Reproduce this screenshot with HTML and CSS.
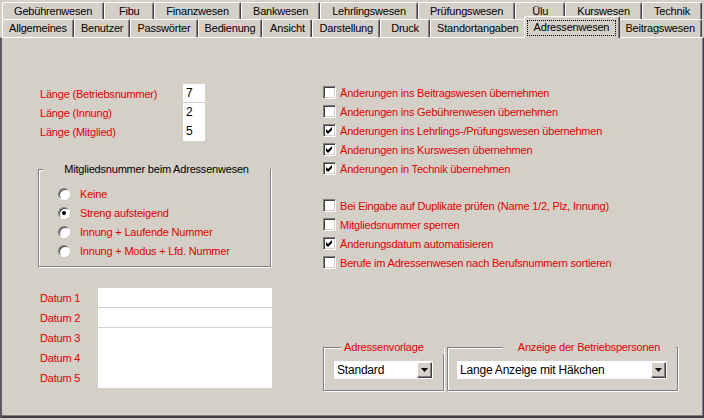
FILE: index.html
```html
<!DOCTYPE html>
<html lang="de">
<head>
  <meta charset="UTF-8" />
  <title>Einstellungen</title>
  <link rel="stylesheet" href="styles.css">
</head>
<body>
  <div class="tabs">
    <div class="tab-row">
      <div class="tab">Gebührenwesen</div>
      <div class="tab">Fibu</div>
      <div class="tab">Finanzwesen</div>
      <div class="tab">Bankwesen</div>
      <div class="tab">Lehrlingswesen</div>
      <div class="tab">Prüfungswesen</div>
      <div class="tab">Ülu</div>
      <div class="tab">Kurswesen</div>
      <div class="tab">Technik</div>
    </div>
    <div class="tab-row front">
      <div class="tab">Allgemeines</div>
      <div class="tab">Benutzer</div>
      <div class="tab">Passwörter</div>
      <div class="tab">Bedienung</div>
      <div class="tab">Ansicht</div>
      <div class="tab">Darstellung</div>
      <div class="tab">Druck</div>
      <div class="tab">Standortangaben</div>
      <div class="tab ativo"><span class="focus">Adressenwesen</span></div>
      <div class="tab">Beitragswesen</div>
    </div>
  </div>

  <div class="panel">
    <div class="col-left">
      <div class="laengen">
        <span class="lbl">Länge (Betriebsnummer)</span><div class="feld sep">7</div>
        <span class="lbl">Länge (Innung)</span><div class="feld">2</div>
        <span class="lbl">Länge (Mitglied)</span><div class="feld">5</div>
      </div>

      <fieldset class="gruppe mitglied">
        <legend>Mitgliedsnummer beim Adressenwesen</legend>
        <div class="radios">
          <div class="opt"><span class="radio"></span>Keine</div>
          <div class="opt"><span class="radio an"></span>Streng aufsteigend</div>
          <div class="opt"><span class="radio"></span>Innung + Laufende Nummer</div>
          <div class="opt"><span class="radio"></span>Innung + Modus + Lfd. Nummer</div>
        </div>
      </fieldset>

      <div class="datum">
        <span class="lbl">Datum 1</span>
        <span class="lbl">Datum 2</span>
        <span class="lbl">Datum 3</span>
        <span class="lbl">Datum 4</span>
        <span class="lbl">Datum 5</span>
        <div class="eingabe d1"></div>
        <div class="eingabe d2"></div>
        <div class="eingabe memo"></div>
      </div>
    </div>

    <div class="col-right">
      <div class="checks">
        <div class="opt"><span class="check"></span>Änderungen ins Beitragswesen übernehmen</div>
        <div class="opt"><span class="check"></span>Änderungen ins Gebührenwesen übernehmen</div>
        <div class="opt"><span class="check an"><svg width="7" height="7" viewBox="0 0 7 7"><polygon points="0,2 2,4 6,0 6,3 2,7 0,5" /></svg></span>Änderungen ins Lehrlings-/Prüfungswesen übernehmen</div>
        <div class="opt"><span class="check an"><svg width="7" height="7" viewBox="0 0 7 7"><polygon points="0,2 2,4 6,0 6,3 2,7 0,5" /></svg></span>Änderungen ins Kurswesen übernehmen</div>
        <div class="opt"><span class="check an"><svg width="7" height="7" viewBox="0 0 7 7"><polygon points="0,2 2,4 6,0 6,3 2,7 0,5" /></svg></span>Änderungen in Technik übernehmen</div>
      </div>

      <div class="checks zweite">
        <div class="opt"><span class="check"></span>Bei Eingabe auf Duplikate prüfen (Name 1/2, Plz, Innung)</div>
        <div class="opt"><span class="check"></span>Mitgliedsnummer sperren</div>
        <div class="opt"><span class="check an"><svg width="7" height="7" viewBox="0 0 7 7"><polygon points="0,2 2,4 6,0 6,3 2,7 0,5" /></svg></span>Änderungsdatum automatisieren</div>
        <div class="opt"><span class="check"></span>Berufe im Adressenwesen nach Berufsnummern sortieren</div>
      </div>

      <div class="combos">
        <fieldset class="gruppe vorlage">
          <legend>Adressenvorlage</legend>
          <div class="combo">
            <span>Standard</span>
            <span class="drop"><svg width="7" height="4" viewBox="0 0 7 4"><polygon points="0,0 7,0 3.5,4" /></svg></span>
          </div>
        </fieldset>
        <fieldset class="gruppe personen">
          <legend>Anzeige der Betriebspersonen</legend>
          <div class="combo">
            <span>Lange Anzeige mit Häkchen</span>
            <span class="drop"><svg width="7" height="4" viewBox="0 0 7 4"><polygon points="0,0 7,0 3.5,4" /></svg></span>
          </div>
        </fieldset>
      </div>
    </div>
  </div>
</body>
</html>
```

FILE: styles.css
```css
* {
  margin: 0;
  padding: 0;
  box-sizing: border-box;
}

body {
  background-color: #d4d0c8;
  color: #000000;
  font-family: 'Liberation Sans', Arial, sans-serif;
  font-size: 11px;
  letter-spacing: -0.2px;
  width: 704px;
  height: 420px;
  overflow: hidden;
}

/* Reiter */

.tabs {
  padding: 2px 2px 0 2px;
  width: 704px;
}

.tab-row {
  display: flex;
  height: 17px;
}

.tab-row.front {
  height: 18px;
  align-items: flex-end;
}

.tab {
  flex: 1 1 auto;
  min-width: 50px;
  height: 100%;
  padding: 0 6px;
  text-align: center;
  white-space: nowrap;
  line-height: 16px;
  border-top: 1px solid #ffffff;
  border-left: 1px solid #ffffff;
  border-right: 1px solid #404040;
  border-radius: 2px 2px 0 0;
  box-shadow: inset -1px 0 #808080;
  background-color: #d4d0c8;
}

.tab-row.front .tab {
  line-height: 17px;
}

.tab-row.front .tab.ativo {
  position: relative;
  z-index: 2;
  flex-shrink: 0;
  height: 22px;
  margin: 0 -2px -1px -2px;
  padding: 3px 3px 2px 2px;
  display: flex;
}

.tab.ativo .focus {
  flex: 1;
  border: 1px dotted #000000;
  padding: 0 6px;
  line-height: 13px;
}

/* Seite */

.panel {
  height: 381px;
  border-top: 1px solid #ffffff;
  border-left: 2px solid #5c5c5c;
  border-right: 1px solid #404040;
  border-bottom: 2px solid #404040;
  box-shadow: inset -1px -1px #808080;
  display: flex;
  padding: 45px 0 0 36px;
  color: #e00000;
}

.col-left {
  width: 234px;
  margin-top: 1px;
}

.col-right {
  width: 356px;
  margin-left: 51px;
}

.lbl {
  display: flex;
  align-items: center;
}

.laengen {
  display: grid;
  grid-template-columns: 143px 22px;
  grid-auto-rows: 19px;
  padding-left: 2px;
}

.feld {
  background-color: #ffffff;
  color: #000000;
  padding-left: 3px;
  font-size: 12px;
  line-height: 18px;
}

.feld.sep {
  border-bottom: 1px solid #d4d0c8;
}

/* Gruppenrahmen */

.gruppe {
  border: 1px solid #808080;
  box-shadow: 1px 1px 0 #ffffff, inset 1px 1px 0 #ffffff;
  padding: 0;
  min-width: 0;
}

.gruppe legend {
  line-height: 13px;
  height: 13px;
  background-color: #d4d0c8;
  white-space: nowrap;
}

.mitglied {
  width: 233px;
  margin-top: 22px;
}

.mitglied legend {
  width: 227px;
  margin-left: 2px;
  text-align: center;
  color: #000000;
}

.radios {
  padding: 8px 0 6px 19px;
}

.opt {
  display: flex;
  align-items: center;
  height: 19px;
  white-space: nowrap;
}

.radio {
  position: relative;
  width: 12px;
  height: 12px;
  border-radius: 50%;
  background-color: #ffffff;
  border: 1px solid;
  border-color: #808080 #ffffff #ffffff #808080;
  box-shadow: inset 1px 1px 0 #404040;
  margin-right: 10px;
  flex-shrink: 0;
}

.radio.an::after {
  content: '';
  position: absolute;
  left: 3px;
  top: 3px;
  width: 4px;
  height: 4px;
  border-radius: 50%;
  background-color: #000000;
}

/* Datum */

.datum {
  display: grid;
  grid-template-columns: 58px 174px;
  grid-template-rows: repeat(5, 20px);
  grid-auto-flow: column;
  margin-top: 21px;
  padding-left: 2px;
}

.eingabe {
  background-color: #ffffff;
  grid-column: 2;
}

.eingabe.d1 {
  grid-row: 1;
  border-bottom: 1px solid #d4d0c8;
}

.eingabe.d2 {
  grid-row: 2;
  border-bottom: 1px solid #d4d0c8;
}

.eingabe.memo {
  grid-row: 3 / 6;
}

/* Checkboxen */

.check {
  width: 13px;
  height: 13px;
  background-color: #ffffff;
  border: 1px solid;
  border-color: #808080 #ffffff #ffffff #808080;
  box-shadow: inset 1px 1px 0 #404040, inset -1px -1px 0 #d4d0c8;
  margin-right: 4px;
  flex-shrink: 0;
  display: flex;
  align-items: center;
  justify-content: center;
}

.check svg {
  fill: #000000;
}

.checks.zweite {
  margin-top: 18px;
}

/* Auswahlfelder */

.combos {
  display: flex;
  gap: 3px;
  margin-top: 69px;
}

.vorlage {
  width: 121px;
  padding: 7px 10px 11px 10px;
}

.vorlage legend {
  width: 103px;
  margin-left: 7px;
  padding-left: 3px;
}

.personen {
  width: 231px;
  padding: 7px 10px 11px 9px;
}

.personen legend {
  width: 173px;
  margin-left: 27px;
  text-align: center;
}

.combo {
  display: flex;
  align-items: center;
  justify-content: space-between;
  height: 18px;
  background-color: #ffffff;
  color: #000000;
  padding: 0 1px 0 3px;
  font-size: 12px;
}

.drop {
  width: 15px;
  height: 16px;
  background-color: #d4d0c8;
  border: 1px solid;
  border-color: #ffffff #404040 #404040 #ffffff;
  box-shadow: inset -1px -1px 0 #808080;
  display: flex;
  align-items: center;
  justify-content: center;
}

.drop svg {
  fill: #000000;
}
```
